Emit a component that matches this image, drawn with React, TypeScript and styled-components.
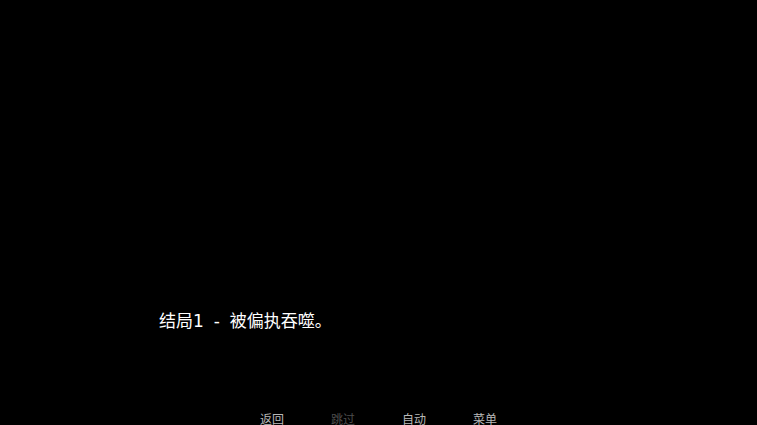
import React from "react";
import styled, { createGlobalStyle } from "styled-components";

const GlobalStyle = createGlobalStyle`
  html, body {
    margin: 0;
    padding: 0;
    background: #000;
  }
  body {
    font-family: "DejaVu Sans", "Noto Sans CJK SC", sans-serif;
  }
`;

const Screen = styled.div`
  width: 100vw;
  height: 100vh;
  overflow: hidden;
  background: #000;
  display: flex;
  flex-direction: column;
  justify-content: flex-end;
`;

const Dialogue = styled.div`
  padding-left: 159px;
  margin-bottom: 84px;
  font-size: 17px;
  line-height: 17px;
  word-spacing: 4.5px;
  color: #ffffff;
  white-space: pre;
`;

const QuickMenu = styled.div`
  display: flex;
  justify-content: center;
  gap: 47px;
  height: 11px;
`;

const QuickButton = styled.div<{ disabled?: boolean }>`
  font-size: 12px;
  line-height: 12px;
  color: ${(p) => (p.disabled ? "#4d4d4d" : "#b8b8b8")};
  cursor: pointer;
`;

const items = [
  { label: "返回", disabled: false },
  { label: "跳过", disabled: true },
  { label: "自动", disabled: false },
  { label: "菜单", disabled: false },
];

export default function App() {
  return (
    <>
      <GlobalStyle />
      <Screen>
        <Dialogue>结局1 - 被偏执吞噬。</Dialogue>
        <QuickMenu>
          {items.map((item) => (
            <QuickButton key={item.label} disabled={item.disabled}>
              {item.label}
            </QuickButton>
          ))}
        </QuickMenu>
      </Screen>
    </>
  );
}
